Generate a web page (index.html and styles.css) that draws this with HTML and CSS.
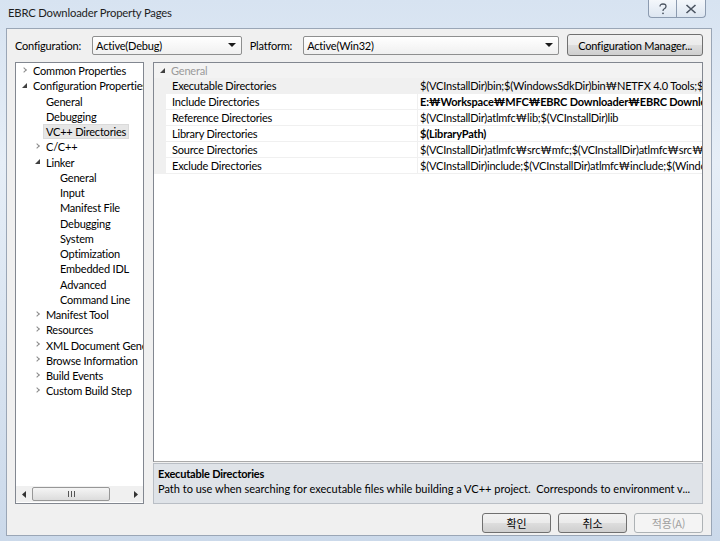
FILE: index.html
```html
<!DOCTYPE html>
<html lang="ko">
<head>
    <meta charset="UTF-8">
    <title>EBRC Downloader Property Pages</title>
    <link rel="stylesheet" href="styles.css">
</head>
<body>
    <div class="window">
        <div class="title-bar">
            <span class="title-text">EBRC Downloader Property Pages</span>
            <div class="caption-btns">
                <div class="caption-btn">
                    <svg width="10" height="12" viewBox="0 0 10 12"><path d="M2 3.5 Q2 1 5 1 Q8 1 8 3.5 Q8 5 6 6 Q5 6.5 5 8" fill="none" stroke="#4a5360" stroke-width="1.3"/><circle cx="5" cy="10.3" r="0.9" fill="#4a5360"/></svg>
                </div>
                <div class="caption-btn">
                    <svg width="12" height="10" viewBox="0 0 12 10"><path d="M1.5 1 L10.5 9 M10.5 1 L1.5 9" stroke="#4a5360" stroke-width="1.6"/></svg>
                </div>
            </div>
        </div>

        <div class="client">
            <div class="toolbar">
                <label class="tb-label">Configuration:</label>
                <div class="combo combo-config">
                    <span>Active(Debug)</span>
                    <span class="combo-arrow"></span>
                </div>
                <label class="tb-label platform-label">Platform:</label>
                <div class="combo combo-platform">
                    <span>Active(Win32)</span>
                    <span class="combo-arrow"></span>
                </div>
                <button class="btn btn-manager">Configuration Manager...</button>
            </div>

            <div class="main">
                <div class="tree">
                    <ul class="tree-list">
                        <li class="lvl0"><span class="tw closed"></span>Common Properties</li>
                        <li class="lvl0"><span class="tw open"></span>Configuration Properties</li>
                        <li class="lvl1"><span class="tw"></span>General</li>
                        <li class="lvl1"><span class="tw"></span>Debugging</li>
                        <li class="lvl1"><span class="tw"></span><span class="sel">VC++ Directories</span></li>
                        <li class="lvl1"><span class="tw closed"></span>C/C++</li>
                        <li class="lvl1"><span class="tw open"></span>Linker</li>
                        <li class="lvl2"><span class="tw"></span>General</li>
                        <li class="lvl2"><span class="tw"></span>Input</li>
                        <li class="lvl2"><span class="tw"></span>Manifest File</li>
                        <li class="lvl2"><span class="tw"></span>Debugging</li>
                        <li class="lvl2"><span class="tw"></span>System</li>
                        <li class="lvl2"><span class="tw"></span>Optimization</li>
                        <li class="lvl2"><span class="tw"></span>Embedded IDL</li>
                        <li class="lvl2"><span class="tw"></span>Advanced</li>
                        <li class="lvl2"><span class="tw"></span>Command Line</li>
                        <li class="lvl1"><span class="tw closed"></span>Manifest Tool</li>
                        <li class="lvl1"><span class="tw closed"></span>Resources</li>
                        <li class="lvl1"><span class="tw closed"></span>XML Document Generator</li>
                        <li class="lvl1"><span class="tw closed"></span>Browse Information</li>
                        <li class="lvl1"><span class="tw closed"></span>Build Events</li>
                        <li class="lvl1"><span class="tw closed"></span>Custom Build Step</li>
                    </ul>
                    <div class="hscroll">
                        <span class="sb-arrow">
                            <svg width="5" height="7" viewBox="0 0 5 7"><path d="M4 0 L0 3.5 L4 7 Z" fill="#333"/></svg>
                        </span>
                        <div class="sb-track">
                            <div class="sb-thumb">
                                <svg width="7" height="6" viewBox="0 0 7 6"><path d="M0.5 0 V6 M3.5 0 V6 M6.5 0 V6" stroke="#555" stroke-width="1"/></svg>
                            </div>
                        </div>
                        <span class="sb-arrow">
                            <svg width="5" height="7" viewBox="0 0 5 7"><path d="M1 0 L5 3.5 L1 7 Z" fill="#333"/></svg>
                        </span>
                    </div>
                </div>

                <div class="pages">
                    <div class="grid">
                        <div class="cat-row">
                            <span class="tw open cat-tw"></span>General
                        </div>
                        <div class="prop-row selected">
                            <div class="gutter"></div>
                            <div class="prop-name">Executable Directories</div>
                            <div class="prop-value">$(VCInstallDir)bin;$(WindowsSdkDir)bin₩NETFX 4.0 Tools;$(WindowsSdkDir)bin;$(VSInstallDir)Common7₩Tools₩bin</div>
                        </div>
                        <div class="prop-row">
                            <div class="gutter"></div>
                            <div class="prop-name">Include Directories</div>
                            <div class="prop-value bold">E:₩Workspace₩MFC₩EBRC Downloader₩EBRC Downloader₩include</div>
                        </div>
                        <div class="prop-row">
                            <div class="gutter"></div>
                            <div class="prop-name">Reference Directories</div>
                            <div class="prop-value">$(VCInstallDir)atlmfc₩lib;$(VCInstallDir)lib</div>
                        </div>
                        <div class="prop-row">
                            <div class="gutter"></div>
                            <div class="prop-name">Library Directories</div>
                            <div class="prop-value bold">$(LibraryPath)</div>
                        </div>
                        <div class="prop-row">
                            <div class="gutter"></div>
                            <div class="prop-name">Source Directories</div>
                            <div class="prop-value">$(VCInstallDir)atlmfc₩src₩mfc;$(VCInstallDir)atlmfc₩src₩mfcm;$(VCInstallDir)atlmfc₩src₩atl</div>
                        </div>
                        <div class="prop-row">
                            <div class="gutter"></div>
                            <div class="prop-name">Exclude Directories</div>
                            <div class="prop-value">$(VCInstallDir)include;$(VCInstallDir)atlmfc₩include;$(WindowsSdkDir)include</div>
                        </div>
                    </div>
                    <div class="desc">
                        <div class="desc-title">Executable Directories</div>
                        <div class="desc-text">Path to use when searching for executable files while building a VC++ project.&nbsp; Corresponds to environment v...</div>
                    </div>
                </div>
            </div>

            <div class="dialog-btns">
                <button class="btn btn-dlg">확인</button>
                <button class="btn btn-dlg">취소</button>
                <button class="btn btn-dlg" disabled>적용(A)</button>
            </div>
        </div>
    </div>
</body>
</html>
```

FILE: styles.css
```css
body {
    margin: 0;
    width: 720px;
    height: 541px;
    overflow: hidden;
    font-family: Lato, "Noto Sans CJK KR", sans-serif;
    font-size: 11px;
    letter-spacing: -0.2px;
    color: #000;
    background: linear-gradient(180deg, #d7e3f1 0%, #e6eef7 30%, #cbd9ea 100%);
}
.window {
    height: 541px;
    padding: 0 8px 5px 6px;
    box-sizing: border-box;
    display: flex;
    flex-direction: column;
}
.title-bar {
    height: 28px;
    display: flex;
    align-items: flex-start;
    justify-content: space-between;
    flex-shrink: 0;
}
.title-text {
    margin-top: 6px;
    margin-left: 2px;
    font-size: 11.3px;
    color: #1e1e1e;
}
.caption-btns {
    display: flex;
    margin-right: 6px;
}
.caption-btn {
    width: 28px;
    height: 18px;
    border: 1px solid #8c9bb0;
    border-top: none;
    background: linear-gradient(180deg, #f4f7fb, #dde6f1);
    display: flex;
    align-items: center;
    justify-content: center;
    box-sizing: border-box;
}
.caption-btn:first-child {
    border-right: none;
    border-bottom-left-radius: 4px;
}
.caption-btn:last-child {
    width: 30px;
    border-bottom-right-radius: 4px;
}
.client {
    flex: 1;
    background: #f0f0f0;
    border: 1px solid #9aa6b6;
    padding: 5px 8px 0 8px;
    display: flex;
    flex-direction: column;
}

/* top toolbar */
.toolbar {
    display: flex;
    align-items: center;
    height: 22px;
}
.tb-label {
    margin-right: 11px;
}
.platform-label {
    margin-left: 8px;
}
.combo {
    height: 19px;
    box-sizing: border-box;
    border: 1px solid #8e8f8f;
    border-radius: 2px;
    background: linear-gradient(180deg, #ffffff, #f0f0f0);
    display: flex;
    align-items: center;
    justify-content: space-between;
    padding: 0 5px 0 3px;
}
.combo-config {
    width: 150px;
}
.combo-platform {
    width: 257px;
    margin-right: 8px;
}
.combo-arrow {
    width: 0;
    height: 0;
    border-left: 4px solid transparent;
    border-right: 4px solid transparent;
    border-top: 4px solid #1a1a1a;
}
.btn {
    font-family: inherit;
    font-size: 11px;
    letter-spacing: -0.2px;
    color: #000;
    border: 1px solid #707070;
    border-radius: 3px;
    background: linear-gradient(180deg, #f2f2f2 0%, #ebebeb 48%, #dddddd 52%, #cfcfcf 100%);
    padding: 0;
    white-space: nowrap;
}
.btn-manager {
    width: 136px;
    height: 22px;
}

/* main area */
.main {
    display: flex;
    margin-top: 6px;
    height: 442px;
}
.tree {
    width: 130px;
    box-sizing: border-box;
    border: 1px solid #828790;
    background: #fff;
    display: flex;
    flex-direction: column;
    overflow: hidden;
}
.tree-list {
    list-style: none;
    margin: 0;
    padding: 0;
    flex: 1;
}
.tree-list li {
    height: 15.25px;
    line-height: 15.25px;
    white-space: nowrap;
    display: flex;
    align-items: center;
}
.lvl0 { padding-left: 4px; }
.lvl1 { padding-left: 17px; }
.lvl2 { padding-left: 31px; }
.tw {
    width: 11px;
    height: 8px;
    flex-shrink: 0;
    margin-right: 2px;
    position: relative;
}
.tw.closed::before {
    content: "";
    position: absolute;
    left: 2px;
    top: 1px;
    width: 3px;
    height: 3px;
    border-right: 1px solid #8a8a8a;
    border-bottom: 1px solid #8a8a8a;
    transform: rotate(-45deg);
}
.tw.open::before {
    content: "";
    position: absolute;
    left: 2px;
    top: 1px;
    width: 0;
    height: 0;
    border-left: 5px solid transparent;
    border-bottom: 5px solid #404040;
}
.sel {
    background: #e6e6e6;
    border: 1px solid #dadada;
    margin-left: -3px;
    padding: 0 2px;
    line-height: 13px;
}
.hscroll {
    height: 16px;
    margin: 0 0 1px 0;
    display: flex;
    align-items: center;
    background: #f0f0f0;
}
.sb-arrow {
    width: 16px;
    display: flex;
    justify-content: center;
}
.sb-track {
    flex: 1;
    height: 14px;
    padding-right: 16px;
}
.sb-thumb {
    width: 78px;
    height: 14px;
    box-sizing: border-box;
    border: 1px solid #979797;
    border-radius: 2px;
    background: linear-gradient(180deg, #f5f5f5, #dcdcdc);
    display: flex;
    align-items: center;
    justify-content: center;
}

.pages {
    margin-left: 9px;
    width: 550px;
    display: flex;
    flex-direction: column;
}
.grid {
    flex: 1;
    background: #fff;
    border: 1px solid #828790;
    border-bottom: 1px solid #a9a9a9;
    overflow: hidden;
}
.cat-row {
    height: 15px;
    line-height: 15px;
    display: flex;
    align-items: center;
    padding-left: 4px;
    color: #9a9a9a;
    background: #f3f3f3;
}
.cat-tw {
    margin-right: 2px;
}
.prop-row {
    display: flex;
    height: 16px;
    line-height: 15px;
    border-bottom: 1px solid #f0f0f0;
    box-sizing: border-box;
}
.gutter {
    width: 12px;
    flex-shrink: 0;
    background: #f0f0f0;
}
.prop-name {
    width: 252px;
    flex-shrink: 0;
    padding-left: 6px;
    box-sizing: border-box;
    border-right: 1px solid #f0f0f0;
}
.prop-value {
    flex: 1;
    padding-left: 2px;
    white-space: nowrap;
    overflow: hidden;
}
.prop-row.selected .prop-name,
.prop-row.selected .prop-value {
    background: #f0f0f0;
}
.bold {
    font-weight: bold;
}
.desc {
    height: 41px;
    margin-top: 1px;
    background: #dfe3e8;
    border: 1px solid #b9bec5;
    box-sizing: border-box;
    padding: 3px 4px;
}
.desc-title {
    font-weight: bold;
    line-height: 14px;
}
.desc-text {
    line-height: 16px;
    letter-spacing: 0;
    white-space: nowrap;
    overflow: hidden;
}

/* dialog buttons */
.dialog-btns {
    display: flex;
    justify-content: flex-end;
    gap: 7px;
    margin-top: 9px;
}
.btn-dlg {
    width: 69px;
    height: 20px;
    font-family: "Noto Sans CJK KR", sans-serif;
    font-size: 11px;
}
.btn-dlg:disabled {
    color: #a0a0a0;
    border-color: #adb2b5;
    background: #f4f4f4;
}
```
